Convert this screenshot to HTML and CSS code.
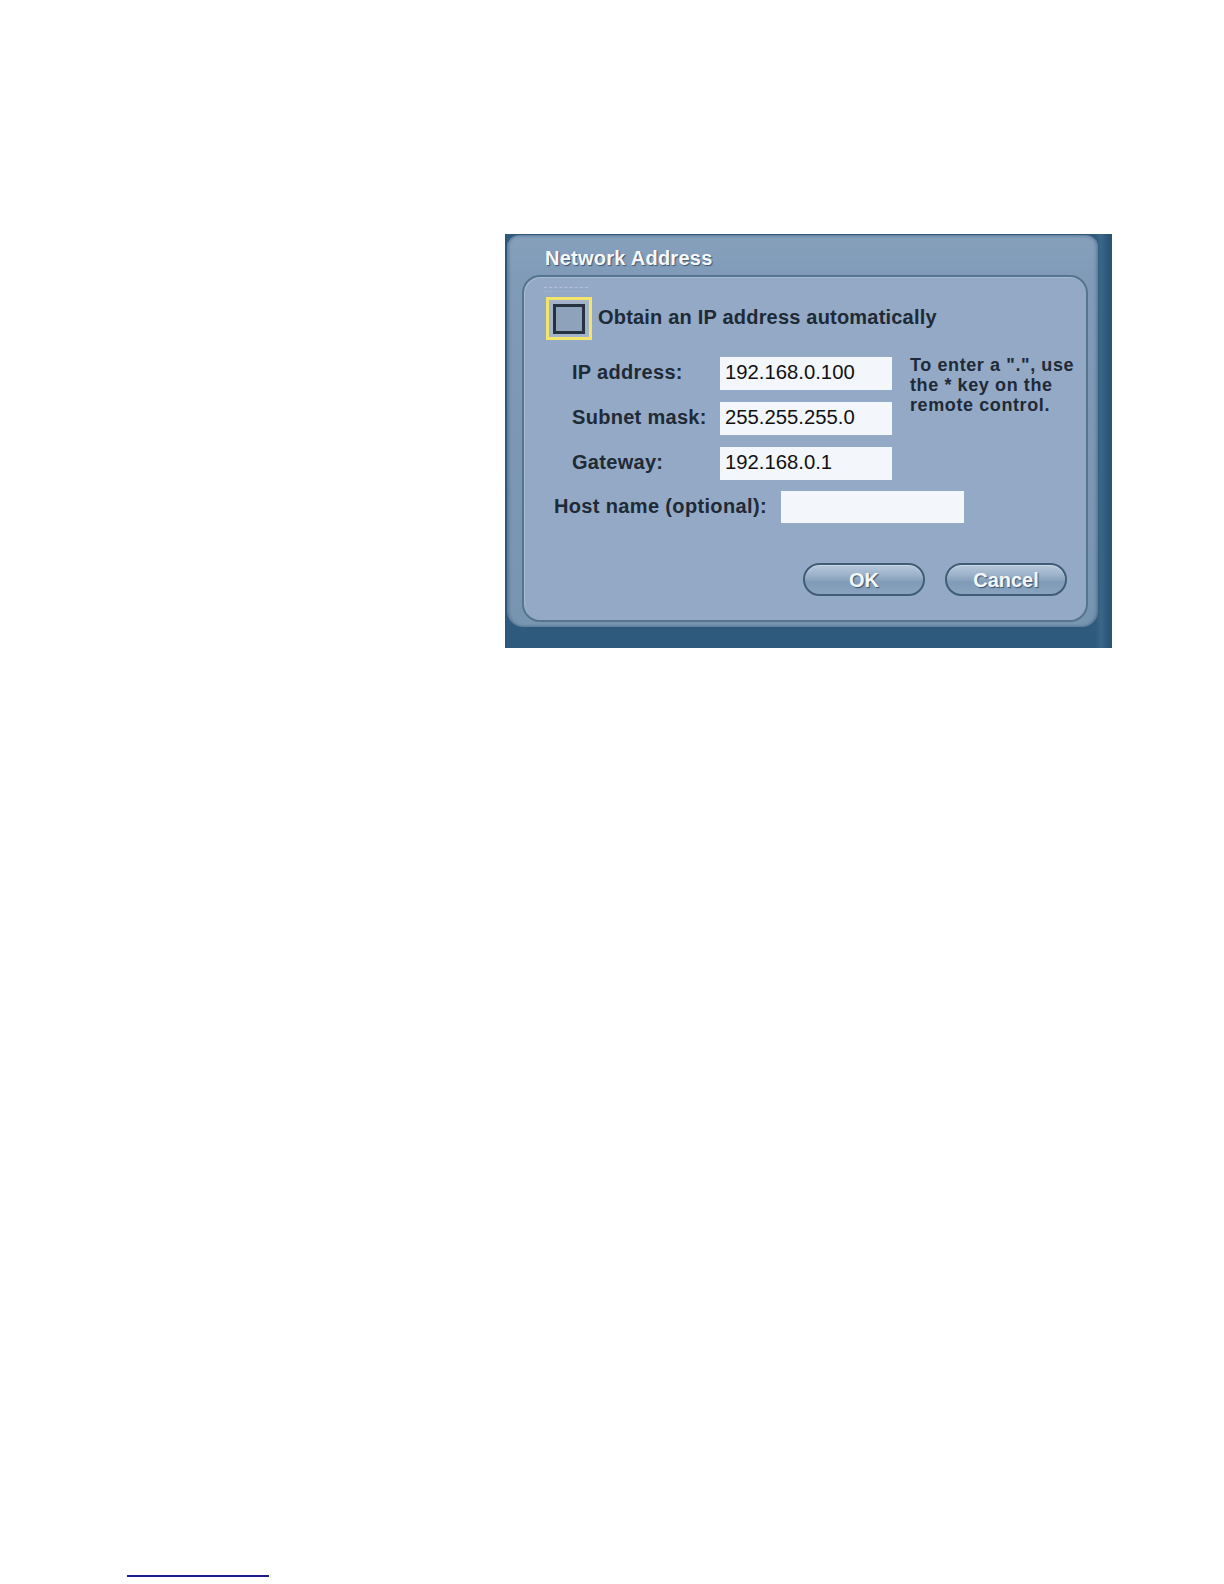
FILE: index.html
```html
<!DOCTYPE html>
<html lang="en">
<head>
<meta charset="utf-8">
<title>Network Address</title>
<link rel="stylesheet" href="styles.css">
</head>
<body>
<div class="page">
  <div class="shot">
    <div class="frame">
      <div class="title">Network Address</div>
      <div class="panel">
        <div class="dots"></div>
        <div class="check-row">
          <div class="check"><div class="check-box"></div></div>
          <span class="check-label">Obtain an IP address automatically</span>
        </div>
        <div class="fields">
          <div class="label">IP address:</div>
          <div class="input">192.168.0.100</div>
          <div class="hint">To enter a ".", use<br>the * key on the<br>remote control.</div>
          <div class="label">Subnet mask:</div>
          <div class="input">255.255.255.0</div>
          <div class="label">Gateway:</div>
          <div class="input">192.168.0.1</div>
        </div>
        <div class="host-row">
          <div class="label host-label">Host name (optional):</div>
          <div class="input host-input"></div>
        </div>
        <div class="buttons">
          <div class="btn">OK</div>
          <div class="btn">Cancel</div>
        </div>
      </div>
    </div>
  </div>
  <div class="footer-rule"></div>
</div>
</body>
</html>
```

FILE: styles.css
```css
html, body {
  margin: 0;
  padding: 0;
  background: #ffffff;
}

body {
  font-family: "Liberation Sans", Arial, sans-serif;
}

.page {
  padding-top: 234px;
  height: 1350px;
}

.shot {
  margin-left: 505px;
  width: 607px;
  height: 414px;
  box-sizing: border-box;
  padding: 1px 14px 0 2px;
  background:
    linear-gradient(to right, #2a5475 0, #2e5a7d 2px, #2e5a7d 590px, #3a6688 596px, #2b5677 603px, #2a5374 607px);
}

.frame {
  width: 591px;
  height: 392px;
  box-sizing: border-box;
  padding: 11px 10px 5px 15px;
  border-radius: 12px 12px 16px 16px;
  background: linear-gradient(to bottom, #7f9ab7 0, #86a0bc 6px, #809bb8 40px, #7794b1 100%);
  box-shadow: inset 2px 0 3px rgba(40, 70, 100, 0.35), inset -2px 0 3px rgba(40, 70, 100, 0.35);
}

.title {
  height: 24px;
  line-height: 24px;
  padding-left: 23px;
  font-size: 20px;
  font-weight: bold;
  letter-spacing: 0.25px;
  color: #f6f8fa;
  text-shadow: 1px 1px 1px #3d5670;
  margin-bottom: 5px;
}

.panel {
  width: 566px;
  height: 347px;
  box-sizing: border-box;
  border: 2px solid #55748d;
  border-radius: 18px;
  background: #94a9c5;
  box-shadow: inset 1px 1px 0 #a8bbd3;
  padding-top: 10px;
  color: #1e2a36;
}

.dots {
  margin-left: 20px;
  width: 44px;
  height: 5px;
  margin-bottom: 5px;
  border-top: 1px dashed #b4bfe0;
  border-bottom: 1px dotted #a6b3d6;
  box-sizing: border-box;
}

.check-row {
  display: flex;
  align-items: center;
  padding-left: 22px;
  height: 43px;
}

.check {
  width: 46px;
  height: 43px;
  box-sizing: border-box;
  border: 3px solid #f3e46c;
  background: #a3b3c9;
  display: flex;
  align-items: center;
  justify-content: center;
}

.check-box {
  width: 32px;
  height: 30px;
  box-sizing: border-box;
  border: 3px solid #26323f;
  background: #8ea2bc;
}

.check-label {
  margin-left: 6px;
  margin-bottom: 4px;
  font-size: 20px;
  font-weight: bold;
  letter-spacing: 0.2px;
  line-height: 24px;
}

.fields {
  display: grid;
  grid-template-columns: 148px 172px auto;
  grid-auto-rows: 33px;
  row-gap: 12px;
  margin-top: 17px;
  padding-left: 48px;
}

.label {
  font-size: 20px;
  font-weight: bold;
  letter-spacing: 0.3px;
  line-height: 20px;
  padding-top: 5px;
}

.input {
  background: #f3f6fa;
  font-size: 20.3px;
  line-height: 20px;
  color: #111;
  padding-left: 5px;
  padding-top: 5px;
  box-sizing: border-box;
}

.hint {
  grid-column: 3;
  grid-row: 1 / span 3;
  margin-left: 18px;
  margin-top: -2px;
  font-size: 18px;
  font-weight: bold;
  letter-spacing: 0.6px;
  line-height: 20px;
}

.host-row {
  display: flex;
  margin-top: 11px;
  padding-left: 30px;
  height: 32px;
}

.host-label {
  width: 227px;
  letter-spacing: 0.35px;
}

.host-input {
  width: 183px;
  height: 32px;
}

.buttons {
  display: flex;
  justify-content: flex-end;
  gap: 20px;
  margin-top: 40px;
  padding-right: 19px;
}

.btn {
  width: 122px;
  height: 33px;
  box-sizing: border-box;
  border: 2px solid #3f5d77;
  border-radius: 17px;
  background: linear-gradient(to bottom, #b8c8da 0, #9cb2ca 35%, #809bb8 60%, #8aa4bf 100%);
  box-shadow: inset 0 1px 0 #cbd7e4;
  color: #f4f7fa;
  font-size: 20px;
  font-weight: bold;
  line-height: 30px;
  text-align: center;
  text-shadow: 1px 1px 1px #3a5269;
}

.footer-rule {
  margin-top: 927px;
  margin-left: 127px;
  width: 142px;
  height: 2px;
  background: #1c1c8c;
}
```
